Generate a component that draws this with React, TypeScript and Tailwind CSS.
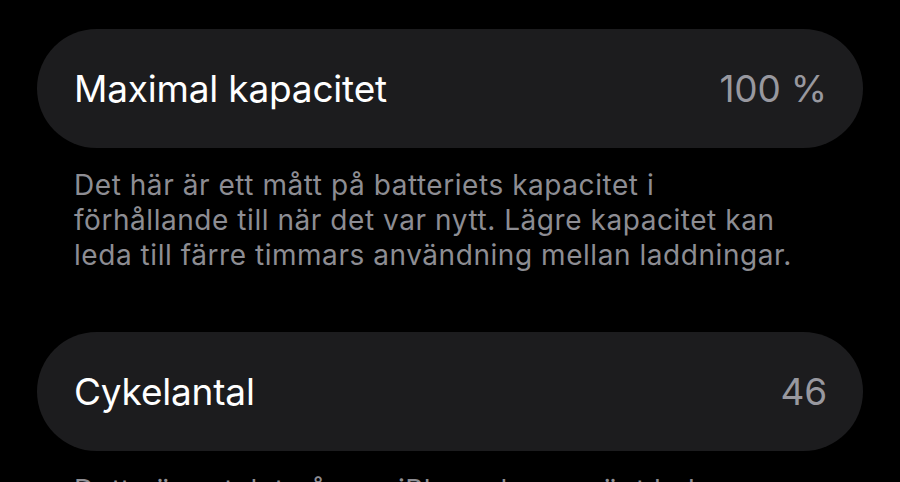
const font = { fontFamily: "Inter, 'Noto Sans', sans-serif" }

function Row({ label, value }: { label: string; value: string }) {
  return (
    <div className="flex h-[119px] items-center justify-between rounded-[60px] bg-[#1c1c1e] pl-[37px] pr-[36px]">
      <span className="text-[37px] tracking-[-0.2px] text-white">{label}</span>
      <span className="text-[37px] tracking-[-0.2px] text-[#98989f]">{value}</span>
    </div>
  )
}

function Footer({ lines }: { lines: string[] }) {
  return (
    <p className="px-[74px] text-[28px] leading-[35px] tracking-[0.55px] text-[#8d8d93] whitespace-nowrap">
      {lines.map((l, i) => (
        <span key={i} className="block">
          {l}
        </span>
      ))}
    </p>
  )
}

export default function App() {
  return (
    <div className="h-[482px] w-[900px] overflow-hidden bg-black" style={font}>
      <div className="px-[37px] pt-[29px]">
        <Row label="Maximal kapacitet" value="100 %" />
      </div>
      <div className="mt-[20px]">
        <Footer
          lines={[
            "Det här är ett mått på batteriets kapacitet i",
            "förhållande till när det var nytt. Lägre kapacitet kan",
            "leda till färre timmars användning mellan laddningar.",
          ]}
        />
      </div>
      <div className="mt-[59px] px-[37px]">
        <Row label="Cykelantal" value="46" />
      </div>
      <div className="mt-[22px]">
        <Footer
          lines={[
            "Detta är antalet gånger iPhone har använt hela",
            "batteriets laddning.",
          ]}
        />
      </div>
    </div>
  )
}
